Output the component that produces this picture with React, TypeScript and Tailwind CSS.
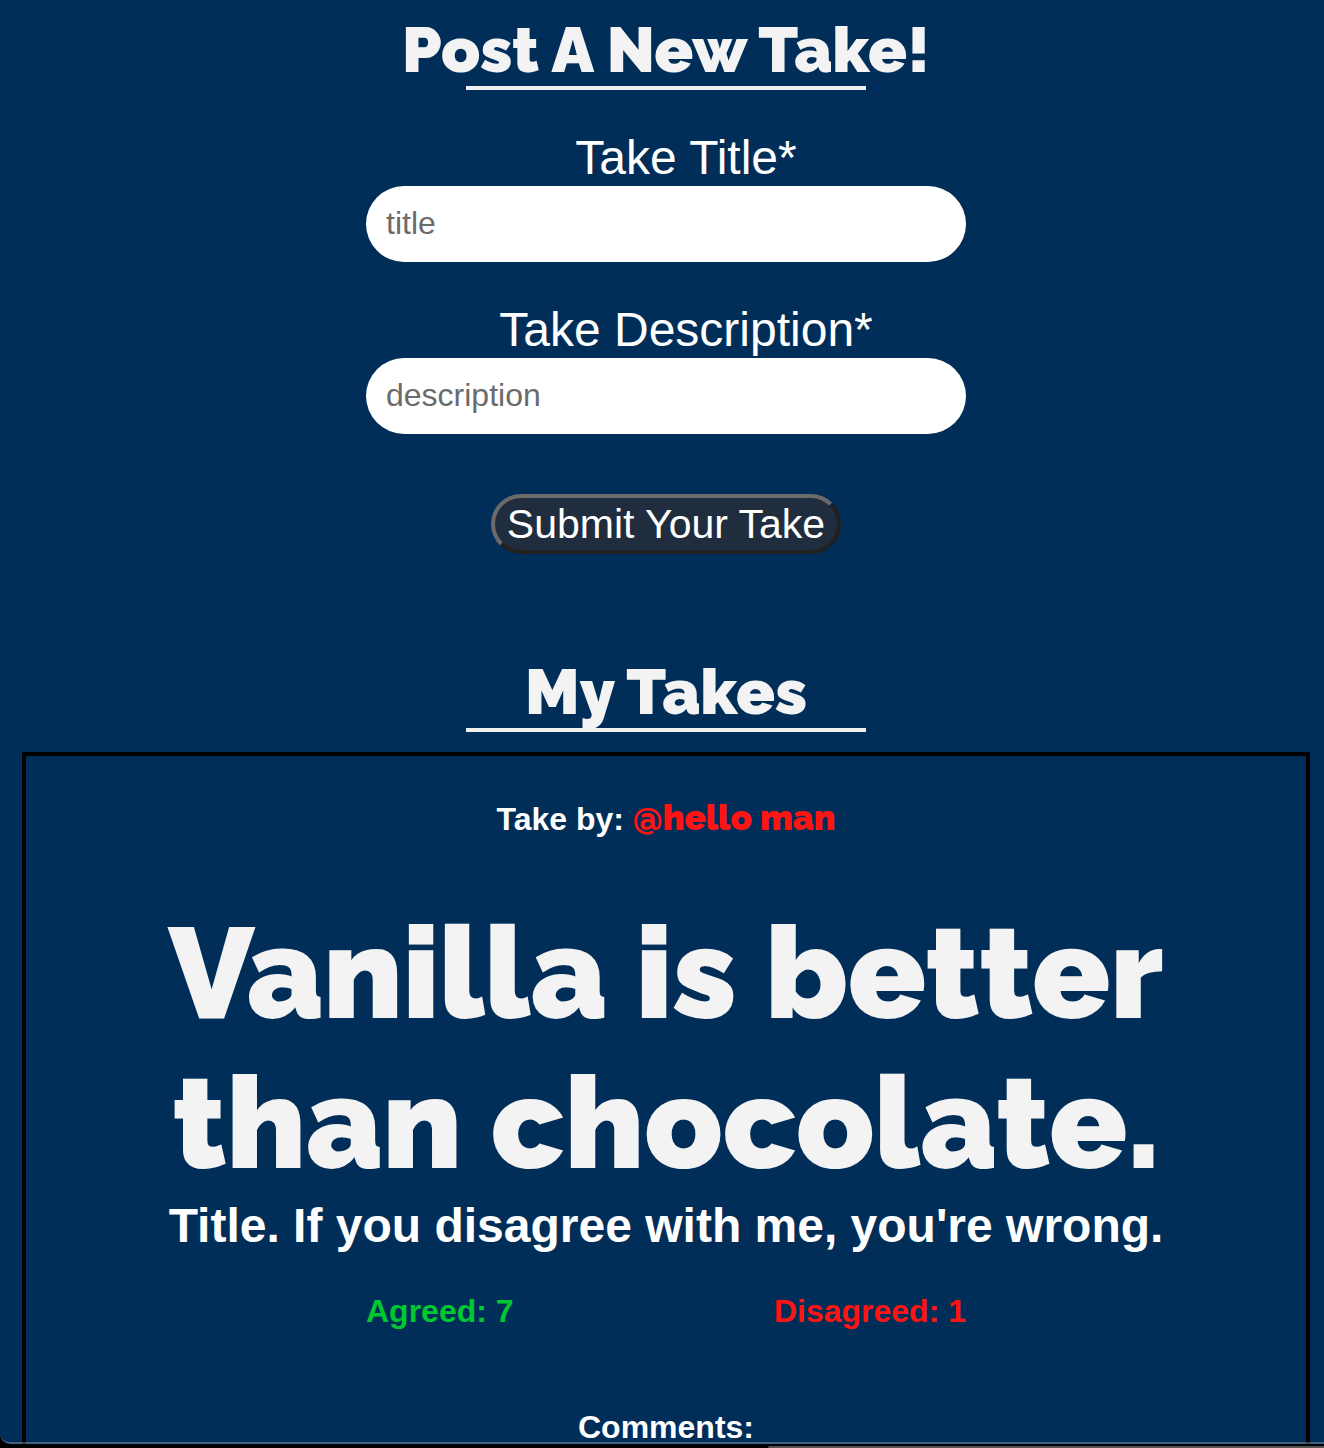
import React from "react";

function Heading({ children }: { children: string }) {
  return (
    <div className="flex flex-col items-center">
      <h2 className="font-['Raleway','Inter',sans-serif] text-[64px] leading-[72px] font-black text-[#f3f3f3]">{children}</h2>
      <div className="h-1 w-[400px] max-w-full bg-[#f0f0f0]" />
    </div>
  );
}

function Field({ id, label, placeholder }: { id: string; label: string; placeholder: string }) {
  return (
    <div className="flex w-[600px] max-w-full flex-col">
      <label htmlFor={id} className="pl-10 text-center text-5xl leading-[56px]">
        {label}
      </label>
      <input
        id={id}
        type="text"
        placeholder={placeholder}
        className="h-[76px] rounded-full bg-white px-5 pb-0.5 text-[32px] text-black placeholder:text-[#6b6b6b]"
      />
    </div>
  );
}

export default function App() {
  return (
    <div className="flex min-h-screen flex-col bg-black font-['Liberation_Sans',Arial,sans-serif] text-white">
      <main className="relative flex grow flex-col overflow-hidden rounded-bl-[10px] bg-[#002e58] pt-[14px] pr-[14px] pl-[22px]">
        <Heading>Post A New Take!</Heading>
        <form className="flex flex-col items-center gap-10 pt-10">
          <Field id="title" label="Take Title*" placeholder="title" />
          <Field id="description" label="Take Description*" placeholder="description" />
          <button
            type="button"
            className="mt-5 h-[60px] rounded-full border-4 border-t-[#6b6b6b] border-r-[#212121] border-b-[#212121] border-l-[#6b6b6b] bg-[#202d3e] px-3 text-[41px] leading-none"
          >
            Submit Your Take
          </button>
        </form>
        <section className="flex grow flex-col pt-[102px]">
          <Heading>My Takes</Heading>
          <article className="mt-5 grow border-4 border-b-0 border-black text-center font-bold">
            <p className="pt-[43px] text-[32px] leading-[40px]">
              Take by:{" "}
              <a href="#user" className="font-['Raleway','Inter',sans-serif] text-[35px] leading-none font-black text-[#ff1414]">
                @hello man
              </a>
            </p>
            <h3 className="mt-[59px] px-20 font-['Raleway','Inter',sans-serif] text-[128px] leading-[150px] font-black text-[#f3f3f3]">
              Vanilla is better than chocolate.
            </h3>
            <p className="text-5xl leading-[56px]">Title. If you disagree with me, you're wrong.</p>
            <div className="mx-auto mt-[37px] flex w-[600px] max-w-full justify-between text-[32px] leading-[40px]">
              <span className="text-[#00c832]">Agreed: 7</span>
              <span className="text-[#ff1414]">Disagreed: 1</span>
            </div>
            <h4 className="mt-[79px] text-[32px] leading-[34px]">Comments:</h4>
          </article>
        </section>
        <div className="pointer-events-none absolute inset-0 rounded-bl-[10px] border-b-2 border-white/25" />
      </main>
      <div className="flex h-1 flex-col items-end justify-end">
        <div className="h-0.5 w-[42%] rounded-tl-sm bg-[#555555]" />
      </div>
    </div>
  );
}
